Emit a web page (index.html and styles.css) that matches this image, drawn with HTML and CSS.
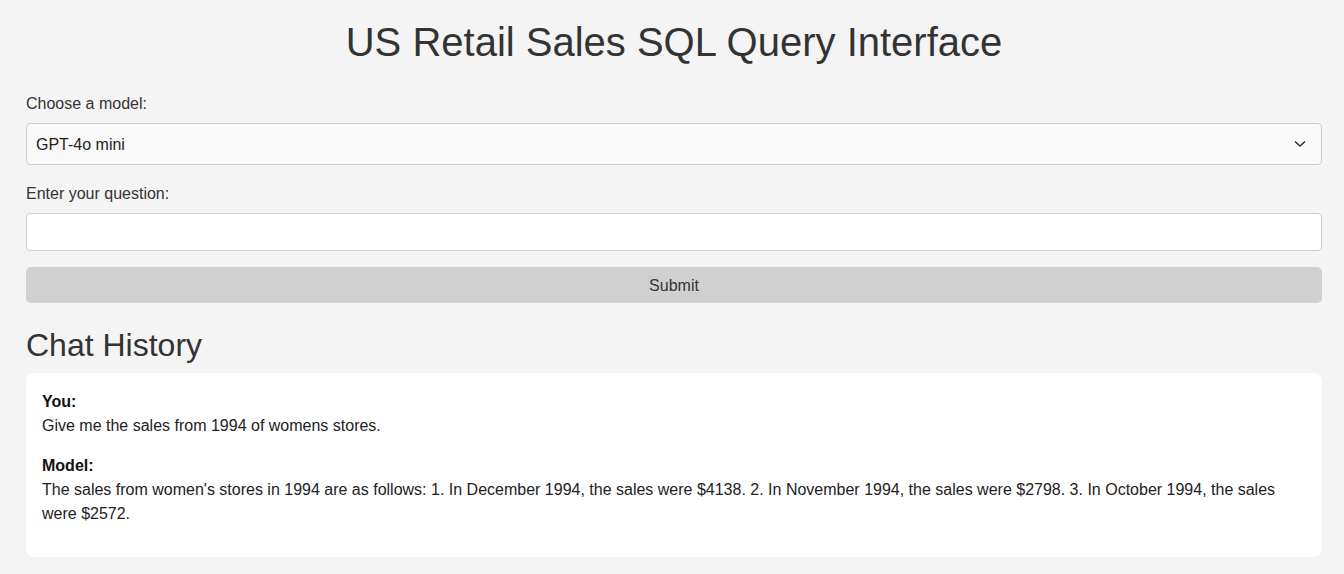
FILE: index.html
```html
<!DOCTYPE html>
<html lang="en">
<head>
<meta charset="utf-8">
<title>US Retail Sales SQL Query Interface</title>
<link rel="stylesheet" href="styles.css">
</head>
<body>
<main class="page">
  <h1 class="title">US Retail Sales SQL Query Interface</h1>
  <form class="query-form">
    <label class="field-label" for="model">Choose a model:</label>
    <div class="select-wrap">
      <select id="model" class="model-select">
        <option>GPT-4o mini</option>
      </select>
      <svg class="chevron" width="12" height="8" viewBox="0 0 12 8" aria-hidden="true"><path d="M1 1.5 L6 6 L11 1.5" fill="none" stroke="#333" stroke-width="1.6"/></svg>
    </div>
    <label class="field-label" for="question">Enter your question:</label>
    <input id="question" class="question-input" type="text">
    <button type="button" class="submit-btn">Submit</button>
  </form>
  <h2 class="section-title">Chat History</h2>
  <section class="chat-box">
    <div class="message"><strong>You:</strong><br>Give me the sales from 1994 of womens stores.</div>
    <div class="message"><strong>Model:</strong><br>The sales from women's stores in 1994 are as follows: 1. In December 1994, the sales were $4138. 2. In November 1994, the sales were $2798. 3. In October 1994, the sales were $2572.</div>
  </section>
</main>
</body>
</html>
```
FILE: styles.css
```css
* { box-sizing: border-box; }
html, body { margin: 0; padding: 0; }
body {
  background: #f4f4f4;
  color: #333;
  font-family: "Liberation Sans", Arial, sans-serif;
  font-size: 16px;
}
.page {
  padding: 19px 22px 18px 26px;
  display: flex;
  flex-direction: column;
}
.title {
  margin: 0;
  font-size: 40px;
  line-height: 46px;
  font-weight: normal;
  text-align: center;
  color: #333;
}
.query-form {
  display: flex;
  flex-direction: column;
  margin-top: 30px;
}
.field-label {
  display: block;
  line-height: 18px;
  margin-bottom: 10px;
}
.select-wrap {
  position: relative;
  margin-bottom: 20px;
}
.model-select {
  width: 100%;
  height: 42px;
  padding: 0 9px;
  font-family: inherit;
  font-size: 16px;
  color: #222;
  background: #f9f9f9;
  border: 1px solid #ccc;
  border-radius: 4px;
  appearance: none;
  -webkit-appearance: none;
  outline: none;
}
.chevron {
  position: absolute;
  right: 16px;
  top: 17px;
  pointer-events: none;
}
.question-input {
  width: 100%;
  height: 38px;
  padding: 0 9px;
  font-family: inherit;
  font-size: 16px;
  background: #fff;
  border: 1px solid #ccc;
  border-radius: 4px;
  outline: none;
  margin-bottom: 16px;
}
.submit-btn {
  width: 100%;
  height: 36px;
  padding: 1px 0 0;
  border: none;
  border-radius: 5px;
  background: #d0d0d0;
  color: #333;
  font-family: inherit;
  font-size: 16px;
}
.section-title {
  margin: 24px 0 9px;
  font-size: 32px;
  line-height: 37px;
  font-weight: normal;
  color: #333;
}
.chat-box {
  background: #fff;
  border-radius: 8px;
  padding: 17px 16px 15px;
  line-height: 24px;
  color: #222;
}
.message { margin-bottom: 16px; }
.message strong { color: #111; }
```
